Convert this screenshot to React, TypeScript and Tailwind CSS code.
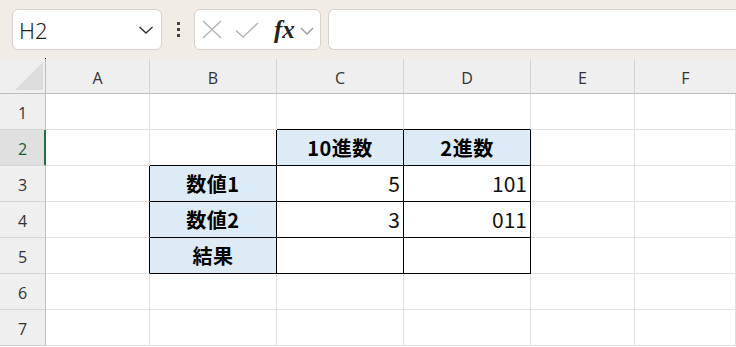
import React from "react";

const letters = ["A", "B", "C", "D", "E", "F", "G"];
const tableCells = new Set(["C2", "D2", "B3", "C3", "D3", "B4", "C4", "D4", "B5", "C5", "D5"]);
const blueCells = new Set(["C2", "D2", "B3", "B4", "B5"]);

const content: Record<string, { text: string; kind: "head" | "num" }> = {
  C2: { text: "10進数", kind: "head" },
  D2: { text: "2進数", kind: "head" },
  B3: { text: "数値1", kind: "head" },
  B4: { text: "数値2", kind: "head" },
  B5: { text: "結果", kind: "head" },
  C3: { text: "5", kind: "num" },
  D3: { text: "101", kind: "num" },
  C4: { text: "3", kind: "num" },
  D4: { text: "011", kind: "num" },
};

const cjk = { fontFamily: '"Noto Sans CJK JP", "Noto Sans", sans-serif' };

function Cell({ c, r }: { c: number; r: number }) {
  const id = letters[c] + r;
  const rightId = letters[c + 1] + r;
  const belowId = letters[c] + (r + 1);
  const rightBlack = tableCells.has(id) || tableCells.has(rightId);
  const bottomBlack = tableCells.has(id) || tableCells.has(belowId);
  const blue = blueCells.has(id);
  const item = content[id];
  return (
    <div
      className={
        "flex items-center border-r border-b " +
        (rightBlack ? "border-r-black " : "border-r-[#e1e1e1] ") +
        (bottomBlack ? "border-b-black " : "border-b-[#e1e1e1] ") +
        (blue ? "bg-[#ddebf7] " : "bg-white ") +
        (item && item.kind === "num" ? "justify-end pr-[3px] " : "justify-center ")
      }
    >
      {item && item.kind === "head" && (
        <span className="text-[20px] font-bold text-black leading-none tracking-[0.5px]" style={cjk}>
          {item.text}
        </span>
      )}
      {item && item.kind === "num" && (
        <span className="text-[21px] font-normal text-[#111] leading-none" style={cjk}>
          {item.text}
        </span>
      )}
    </div>
  );
}

export default function App() {
  const rows = [1, 2, 3, 4, 5, 6, 7];
  return (
    <div
      className="w-[736px] h-[347px] overflow-hidden bg-white"
      style={{ fontFamily: '"Open Sans", "Noto Sans CJK JP", sans-serif' }}
    >
      {/* toolbar */}
      <div className="h-[59px] bg-[#f1ece6] flex items-center">
        <div className="ml-[12px] w-[150px] h-[41px] bg-white border border-[#d6d2cd] rounded-[6px] flex items-center justify-between pl-[6px] pr-[6px]">
          <span className="text-[22px] font-light text-[#222] leading-none" style={{ fontFamily: '"Noto Sans", sans-serif' }}>
            H2
          </span>
          <svg width="16" height="10" viewBox="0 0 16 10" className="mr-[1px]">
            <path d="M1.5 2 L8 8 L14.5 2" fill="none" stroke="#333" strokeWidth="1.5" />
          </svg>
        </div>
        <div className="w-[32px] flex flex-col items-center gap-[3px]">
          <div className="w-[3px] h-[3px] bg-[#444]" />
          <div className="w-[3px] h-[3px] bg-[#444]" />
          <div className="w-[3px] h-[3px] bg-[#444]" />
        </div>
        <div className="w-[127px] h-[41px] bg-white border border-[#d6d2cd] rounded-[6px] flex items-center pl-[7px]">
          <svg width="20" height="19" viewBox="0 0 20 19">
            <path d="M1 1 L19 18 M19 1 L1 18" stroke="#b3b3b3" strokeWidth="1.4" fill="none" />
          </svg>
          <svg width="24" height="18" viewBox="0 0 24 18" className="ml-[13px]">
            <path d="M1 9.5 L8 16 L23 2" stroke="#b3b3b3" strokeWidth="1.4" fill="none" />
          </svg>
          <span
            className="ml-[15px] text-[25px] italic font-bold text-[#222] leading-none"
            style={{ fontFamily: '"Liberation Serif", serif' }}
          >
            fx
          </span>
          <svg width="14" height="10" viewBox="0 0 14 10" className="ml-[5px] mt-[2px]">
            <path d="M1 2 L7 8 L13 2" fill="none" stroke="#999" strokeWidth="1.3" />
          </svg>
        </div>
        <div className="ml-[7px] flex-1 h-[41px] bg-white border border-[#d6d2cd] border-r-0 rounded-l-[6px]" />
      </div>

      {/* sheet */}
      <div
        className="grid"
        style={{
          gridTemplateColumns: "46px 104px 127px 127px 127px 104px 101px",
          gridTemplateRows: "35px repeat(7, 36px)",
        }}
      >
        <div className="relative bg-[#efefef] border-r border-b border-[#bdbdbd]">
          <div className="absolute right-[-1px] top-[-1px] w-[1px] h-[1px] bg-black" />
          <svg width="30" height="30" viewBox="0 0 30 30" className="absolute left-[15px] top-[3px]">
            <path d="M28 0 L28 28 L0 28 Z" fill="#dcdcdc" />
          </svg>
        </div>
        {letters.slice(0, 6).map((l, i) => (
          <div
            key={l}
            className={
              "bg-[#efefef] border-b border-b-[#bdbdbd] flex items-center justify-center text-[16px] text-[#333] " +
              (i < 5 ? "border-r border-r-[#d4d4d4]" : "")
            }
          >
            <span className="pt-[3px]">{l}</span>
          </div>
        ))}
        {rows.map((r) => (
          <React.Fragment key={r}>
            <div
              className={
                "relative flex items-center justify-center text-[16px] border-b border-b-[#d4d4d4] border-r " +
                (r === 2
                  ? "bg-[#e0e0e0] text-[#185c37] border-r-[#1e7145]"
                  : "bg-[#efefef] text-[#333] border-r-[#bdbdbd]")
              }
            >
              {r === 2 && <div className="absolute right-[-1px] top-0 bottom-0 w-[2px] bg-[#1e7145]" />}
              <span className="pt-[2px]">{r}</span>
            </div>
            {[0, 1, 2, 3, 4, 5].map((c) => (
              <Cell key={c} c={c} r={r} />
            ))}
          </React.Fragment>
        ))}
      </div>
    </div>
  );
}
